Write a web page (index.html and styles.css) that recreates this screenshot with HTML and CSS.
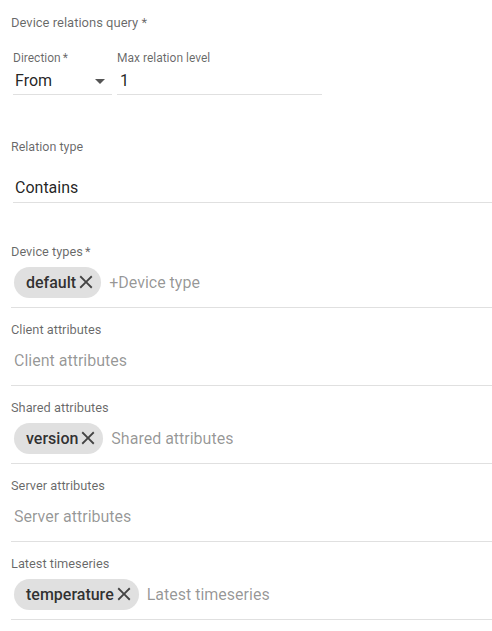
FILE: index.html
```html
<!DOCTYPE html>
<html>
<head>
<meta charset="utf-8">
<link rel="stylesheet" href="styles.css">
</head>
<body>
<div class="form">
  <div class="section-title">Device relations query *</div>
  <div class="query-row">
    <div class="field field-direction">
      <div class="float-label">Direction<span class="req">*</span></div>
      <div class="field-value select-value">
        <span>From</span>
        <svg class="arrow" width="10" height="5" viewBox="0 0 10 5"><path d="M0 0L5 5L10 0z" fill="#555"/></svg>
      </div>
    </div>
    <div class="field field-level">
      <div class="float-label">Max relation level</div>
      <div class="field-value">1</div>
    </div>
  </div>

  <div class="relation-label">Relation type</div>
  <div class="field field-relation">
    <div class="field-value">Contains</div>
  </div>

  <div class="chip-field first">
    <div class="chip-label">Device types<span class="req">*</span></div>
    <div class="chip-row">
      <span class="chip">default<svg class="chip-x" viewBox="0 0 24 24"><path d="M19 6.41L17.59 5 12 10.59 6.41 5 5 6.41 10.59 12 5 17.59 6.41 19 12 13.41 17.59 19 19 17.59 13.41 12z"/></svg></span>
      <span class="placeholder">+Device type</span>
    </div>
  </div>

  <div class="chip-field">
    <div class="chip-label">Client attributes</div>
    <div class="chip-row">
      <span class="placeholder solo">Client attributes</span>
    </div>
  </div>

  <div class="chip-field">
    <div class="chip-label">Shared attributes</div>
    <div class="chip-row">
      <span class="chip">version<svg class="chip-x" viewBox="0 0 24 24"><path d="M19 6.41L17.59 5 12 10.59 6.41 5 5 6.41 10.59 12 5 17.59 6.41 19 12 13.41 17.59 19 19 17.59 13.41 12z"/></svg></span>
      <span class="placeholder">Shared attributes</span>
    </div>
  </div>

  <div class="chip-field">
    <div class="chip-label">Server attributes</div>
    <div class="chip-row">
      <span class="placeholder solo">Server attributes</span>
    </div>
  </div>

  <div class="chip-field">
    <div class="chip-label">Latest timeseries</div>
    <div class="chip-row">
      <span class="chip">temperature<svg class="chip-x" viewBox="0 0 24 24"><path d="M19 6.41L17.59 5 12 10.59 6.41 5 5 6.41 10.59 12 5 17.59 6.41 19 12 13.41 17.59 19 19 17.59 13.41 12z"/></svg></span>
      <span class="placeholder">Latest timeseries</span>
    </div>
  </div>
</div>
</body>
</html>
```

FILE: styles.css
```css
html, body {
  margin: 0;
  padding: 0;
  background: #ffffff;
}

body {
  font-family: Roboto, "Noto Sans", sans-serif;
  color: rgba(0, 0, 0, 0.87);
}

.form {
  padding: 15px 0 0 11px;
}

.section-title {
  font-size: 13px;
  line-height: 16px;
  color: rgba(0, 0, 0, 0.6);
}

.req {
  margin-left: 2px;
}

.query-row {
  display: flex;
  gap: 5px;
  margin-top: 19px;
  padding-left: 2px;
}

.field-direction {
  width: 99px;
}

.field-level {
  width: 205px;
}

.float-label {
  font-size: 12px;
  line-height: 14px;
  padding-top: 1px;
  color: rgba(0, 0, 0, 0.6);
}

.field-value {
  margin-top: 6px;
  font-size: 16px;
  line-height: 20px;
  padding: 0 0 3px 2px;
  border-bottom: 1px solid #e0e0e0;
}

.select-value {
  display: flex;
  align-items: center;
  justify-content: space-between;
  padding-right: 7px;
}

.arrow {
  display: block;
}

.field-level .field-value {
  padding-left: 3px;
}

.relation-label {
  margin-top: 43px;
  padding-top: 1px;
  font-size: 12.5px;
  line-height: 16px;
  color: rgba(0, 0, 0, 0.6);
}

.field-relation {
  margin-left: 2px;
}

.field-relation .field-value {
  margin-top: 23px;
  padding-bottom: 4px;
}

.chip-field {
  margin-top: 13px;
  border-bottom: 1px solid #e0e0e0;
  padding-bottom: 9px;
}

.chip-field.first {
  margin-top: 40px;
}

.chip-label {
  font-size: 12.8px;
  line-height: 16px;
  padding-top: 1px;
  color: rgba(0, 0, 0, 0.6);
}

.chip-row {
  margin-top: 6px;
  height: 32px;
  display: flex;
  align-items: center;
  padding-left: 3px;
}

.chip {
  display: inline-flex;
  align-items: center;
  height: 31px;
  border-radius: 16px;
  background: #e0e0e0;
  padding: 0 4px 0 12px;
  font-size: 16px;
  font-weight: 500;
  color: rgba(0, 0, 0, 0.8);
}

.chip-x {
  width: 22px;
  height: 22px;
  margin-left: -1px;
  fill: rgba(0, 0, 0, 0.7);
}

.placeholder {
  margin-left: 8px;
  font-size: 16px;
  color: rgba(0, 0, 0, 0.42);
}

.placeholder.solo {
  margin-left: 0;
}
```
